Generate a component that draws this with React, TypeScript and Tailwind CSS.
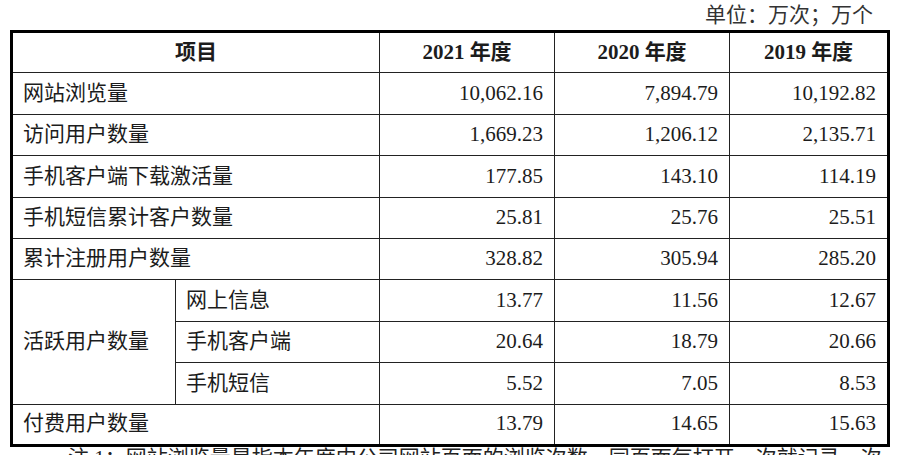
const rows: { label: string; values: string[] }[] = [
  { label: "网站浏览量", values: ["10,062.16", "7,894.79", "10,192.82"] },
  { label: "访问用户数量", values: ["1,669.23", "1,206.12", "2,135.71"] },
  { label: "手机客户端下载激活量", values: ["177.85", "143.10", "114.19"] },
  { label: "手机短信累计客户数量", values: ["25.81", "25.76", "25.51"] },
  { label: "累计注册用户数量", values: ["328.82", "305.94", "285.20"] },
];

const active: { label: string; values: string[] }[] = [
  { label: "网上信息", values: ["13.77", "11.56", "12.67"] },
  { label: "手机客户端", values: ["20.64", "18.79", "20.66"] },
  { label: "手机短信", values: ["5.52", "7.05", "8.53"] },
];

const paid = { label: "付费用户数量", values: ["13.79", "14.65", "15.63"] };

const cell = "border border-[#222] h-[41.4px] p-0 align-middle";
const labelCell = `${cell} text-left pl-[10px]`;
const numCell = `${cell} text-right pr-[11px]`;

export default function App() {
  return (
    <div
      className="w-[900px] h-[455px] overflow-hidden bg-white text-[#1c1c1c] text-[21px]"
      style={{ fontFamily: '"Liberation Serif", "Noto Sans CJK SC", serif' }}
    >
      <div className="h-[30px] leading-[30px] text-right pr-[27px] text-[#333]">
        单位：万次；万个
      </div>

      <table className="ml-[10px] w-[877px] table-fixed border-collapse border-[3px] border-black">
        <colgroup>
          <col className="w-[164px]" />
          <col className="w-[204px]" />
          <col className="w-[175px]" />
          <col className="w-[175px]" />
          <col className="w-[159px]" />
        </colgroup>
        <thead>
          <tr>
            <th colSpan={2} className={`${cell} text-center font-bold`}>
              项目
            </th>
            <th className={`${cell} text-center font-bold`}>2021 年度</th>
            <th className={`${cell} text-center font-bold`}>2020 年度</th>
            <th className={`${cell} text-center font-bold`}>2019 年度</th>
          </tr>
        </thead>
        <tbody>
          {rows.map((r) => (
            <tr key={r.label}>
              <td colSpan={2} className={labelCell}>
                {r.label}
              </td>
              {r.values.map((v, i) => (
                <td key={i} className={numCell}>
                  {v}
                </td>
              ))}
            </tr>
          ))}
          {active.map((r, idx) => (
            <tr key={r.label}>
              {idx === 0 && (
                <td rowSpan={3} className={labelCell}>
                  活跃用户数量
                </td>
              )}
              <td className={labelCell}>{r.label}</td>
              {r.values.map((v, i) => (
                <td key={i} className={numCell}>
                  {v}
                </td>
              ))}
            </tr>
          ))}
          <tr>
            <td colSpan={2} className={labelCell}>
              {paid.label}
            </td>
            {paid.values.map((v, i) => (
              <td key={i} className={numCell}>
                {v}
              </td>
            ))}
          </tr>
        </tbody>
      </table>

      <p className="mt-[1px] pl-[68px] leading-[21px] whitespace-nowrap text-[#222]">
        注 1：网站浏览量是指本年度内公司网站页面的浏览次数，同页面每打开一次就记录一次
      </p>
    </div>
  );
}
